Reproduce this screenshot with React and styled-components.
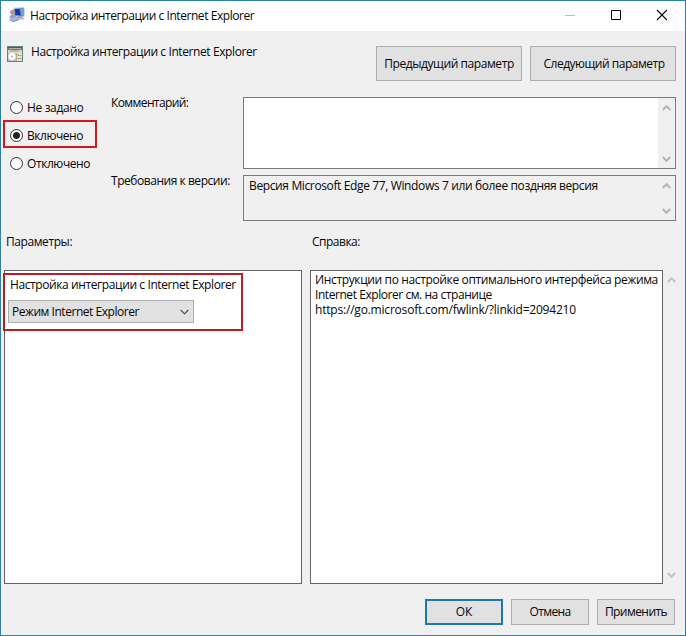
import React from 'react';
import styled, { createGlobalStyle } from 'styled-components';

const Chevron = ({ up, color = '#b4b4b4', size = 9, weight = 2 }) => (
  <svg width={size} height="6" viewBox="0 0 9 6" fill="none">
    <path
      d={up ? 'M0.7 5L4.5 1.2L8.3 5' : 'M0.7 1L4.5 4.8L8.3 1'}
      stroke={color}
      strokeWidth={weight}
    />
  </svg>
);

const ComputerIcon = () => (
  <svg width="16" height="16" viewBox="0 0 16 16">
    <path d="M4.5 0.8L15.5 0.3V10L5 9.5Z" fill="#b4bfd0" />
    <path d="M5.5 2L14.3 1.4V8.8L6 8.3Z" fill="#1b35ae" />
    <path d="M10.5 1.7L14.3 1.4V8.8L12 8.5Z" fill="#6fa0e8" />
    <path d="M8 9.6H13L14.5 11.5H8Z" fill="#8d98aa" />
    <path d="M7 11H14.8L15.4 12.8H8Z" fill="#c4cad4" />
    <circle cx="3.8" cy="5.2" r="2.5" fill="#a89c88" />
    <path d="M0.8 12C0.4 9 1.6 7.4 3.8 7.4C6.2 7.4 7.6 9 8 12Z" fill="#8aa3cf" />
    <path d="M0.3 11.2L7 10L10 12.4L4 14.6Z" fill="#a9b8d3" />
    <path d="M0.6 12.6L4 14.6L10 12.6" stroke="#7687a5" fill="none" />
  </svg>
);

const PolicyIcon = () => (
  <svg width="16" height="16" viewBox="0 0 16 16">
    <path d="M0 0H16V16H0Z" fill="#63808a" />
    <path d="M1 1H15V2H1Z" fill="#3f6069" />
    <path d="M2 2.5H14" stroke="#a9b7b0" />
    <path d="M1 4H15V7H1Z" fill="#ddd8c8" />
    <path d="M3 5H12" stroke="#b58c62" />
    <path d="M1 7H9V15H1Z" fill="#b4c0c5" />
    <path d="M9.5 7H15V15H9.5Z" fill="#f0e3c4" />
    <circle cx="5" cy="10.5" r="3.7" fill="#f8f8f5" />
    <circle cx="5" cy="10.5" r="0.8" fill="#83939b" />
    <path d="M10.5 8.5H12V10H10.5ZM10.5 12H12V13.5H10.5Z" fill="#c08a55" />
    <path d="M12.5 9.5H14.5M12.5 12.5H14.5" stroke="#a79a80" />
  </svg>
);

class PolicyDialog extends React.Component {
  constructor(props) {
    super(props)
    this.state = {
      value: 'enabled'
    }
  }

  onSelect = value => {
    this.setState({ value })
  }

  render() {
    const { value } = this.state
    const options = [
      { id: 'unset', label: 'Не задано', spacing: -0.35 },
      { id: 'enabled', label: 'Включено', spacing: -0.45 },
      { id: 'disabled', label: 'Отключено', spacing: -0.42 }
    ]

    return (
      <Window>
        <GlobalStyle />
        <TitleBar>
          <ComputerIcon />
          <Title $spacing={-0.44}>Настройка интеграции с Internet Explorer</Title>
          <svg width="102" height="12" viewBox="0 0 102 12" fill="none">
            <path d="M0 6.5H10" stroke="#bdbdbd" />
            <path d="M46.5 1.5H55.5V10.5H46.5Z" stroke="#000" />
            <path d="M92 1L102 11M102 1L92 11" stroke="#000" strokeWidth="1.1" />
          </svg>
        </TitleBar>
        <Header>
          <PolicyIcon />
          <PolicyName $spacing={-0.4}>Настройка интеграции с Internet Explorer</PolicyName>
          <NavButton><Text $spacing={-0.42}>Предыдущий параметр</Text></NavButton>
          <NavButton $shift={2}><Text $spacing={-0.49}>Следующий параметр</Text></NavButton>
        </Header>
        <Settings>
          <Radios>
            {options.map(option => (
              <Radio key={option.id} onClick={() => this.onSelect(option.id)}>
                <Dot $checked={value === option.id} />
                <Text $spacing={option.spacing}>{option.label}</Text>
                {option.id === 'enabled' ? <RadioMark /> : null}
              </Radio>
            ))}
          </Radios>
          <Fields>
            <Label $spacing={-0.6}>Комментарий:</Label>
            <Field $height={72} $white>
              <FieldText />
              <ScrollBar><Chevron up /><Chevron /></ScrollBar>
            </Field>
            <Label $spacing={-0.46}>Требования к версии:</Label>
            <Field $height={46}>
              <FieldText $spacing={-0.37}>Версия Microsoft Edge 77, Windows 7 или более поздняя версия</FieldText>
              <ScrollBar><Chevron up /><Chevron /></ScrollBar>
            </Field>
          </Fields>
        </Settings>
        <Captions>
          <Text $spacing={-0.42}>Параметры:</Text>
          <Text $spacing={-0.5}>Справка:</Text>
        </Captions>
        <Panels>
          <OptionsPanel>
            <OptionLabel $spacing={-0.4}>Настройка интеграции с Internet Explorer</OptionLabel>
            <Select>
              <Text $spacing={-0.46}>Режим Internet Explorer</Text>
              <Chevron color="#444" weight={1.1} />
            </Select>
            <OptionsMark />
          </OptionsPanel>
          <HelpPanel>
            <HelpLine $spacing={-0.36}>Инструкции по настройке оптимального интерфейса режима</HelpLine>
            <HelpLine $spacing={-0.44}>Internet Explorer см. на странице</HelpLine>
            <HelpLine $spacing={-0.2}>https://go.microsoft.com/fwlink/?linkid=2094210</HelpLine>
          </HelpPanel>
          <ScrollBar><Chevron up color="#c3c3c3" /><Chevron color="#c3c3c3" /></ScrollBar>
        </Panels>
        <Footer>
          <Button $primary>ОК</Button>
          <Button><Text $spacing={-0.6}>Отмена</Text></Button>
          <Button><Text $spacing={-0.55}>Применить</Text></Button>
        </Footer>
      </Window>
    )
  }
}

const GlobalStyle = createGlobalStyle`
*{
  box-sizing:border-box;
}
body{
  margin:0;
  font-family:"Open Sans", "Noto Sans", sans-serif;
  font-size:12px;
  line-height:15px;
  color:#060606;
}
svg{
  display:block;
  flex-shrink:0;
}
`
const Window = styled.div`
display:flex;
flex-direction:column;
width:686px;
height:636px;
border:1px solid #2a82ab;
background:#f0f0f0;
`
const TitleBar = styled.div`
display:flex;
align-items:center;
height:30px;
padding:0 18px 2px 8px;
background:#fff;
`
const Text = styled.span`
white-space:nowrap;
letter-spacing:${props => props.$spacing || 0}px;
`
const Title = styled(Text)`
flex:1;
margin-left:5px;
`
const Header = styled.div`
display:flex;
align-items:flex-start;
height:66px;
padding:15px 9px 0 6px;
gap:8px;
`
const PolicyName = styled(Text)`
flex:1;
margin-top:-2px;
`
const NavButton = styled.button`
width:146px;
height:35px;
padding:0 0 1px ${props => props.$shift || 0}px;
border:1px solid #adadad;
background:#e1e1e1;
color:#060606;
font:inherit;
white-space:nowrap;
`
const Settings = styled.div`
display:flex;
height:124px;
padding-left:9px;
`
const Radios = styled.div`
display:flex;
flex-direction:column;
width:101px;
padding-top:2px;
gap:12px;
`
const Radio = styled.div`
position:relative;
display:flex;
align-items:center;
height:16px;
gap:4px;
`
const Dot = styled.span`
width:13px;
height:13px;
border:1px solid #333;
border-radius:50%;
background:${props => props.$checked ? 'radial-gradient(circle, #222 3px, #fff 4px)' : '#fff'};
`
const RadioMark = styled.div`
position:absolute;
left:-7px;
top:-7px;
width:94px;
height:28px;
border:2px solid #d01a1f;
`
const Fields = styled.div`
display:grid;
grid-template-columns:132px 433px;
grid-template-rows:72px 46px;
row-gap:6px;
`
const Label = styled(Text)`
margin-top:-2px;
`
const Field = styled.div`
display:flex;
height:${props => props.$height}px;
border:1px solid #7a7a7a;
background:${props => props.$white ? '#fff' : '#f0f0f0'};
`
const FieldText = styled(Text)`
flex:1;
padding:2px 0 0 5px;
`
const ScrollBar = styled.div`
display:flex;
flex-direction:column;
align-items:center;
justify-content:space-between;
width:17px;
padding:7px 0 6px;
background:#f0f0f0;
`
const Captions = styled.div`
display:grid;
grid-template-columns:306px 1fr;
height:49px;
padding:13px 0 0 5px;
`
const Panels = styled.div`
display:flex;
height:314px;
padding-left:3px;
`
const OptionsPanel = styled.div`
position:relative;
width:298px;
margin-right:8px;
padding:6px 0 0 3px;
border:1px solid #646464;
background:#fff;
`
const OptionLabel = styled(Text)`
display:block;
padding-left:2px;
`
const Select = styled.div`
display:flex;
align-items:center;
justify-content:space-between;
width:186px;
height:23px;
margin-top:8px;
padding:0 4px 0 3px;
border:1px solid #adadad;
background:#e1e1e1;
`
const OptionsMark = styled.div`
position:absolute;
left:-2px;
top:2px;
width:240px;
height:58px;
border:2px solid #c01d22;
`
const HelpPanel = styled.div`
width:353px;
padding:1px 0 0 4px;
border:1px solid #646464;
background:#fff;
`
const HelpLine = styled(Text)`
display:block;
`
const Footer = styled.div`
display:flex;
justify-content:flex-end;
gap:8px;
padding:15px 10px 0 0;
`
const Button = styled.button`
width:78px;
height:26px;
padding:0 0 1px;
border:${props => props.$primary ? '2px solid #1b78ab' : '1px solid #adadad'};
background:#e1e1e1;
color:#060606;
font:inherit;
`

export default PolicyDialog
